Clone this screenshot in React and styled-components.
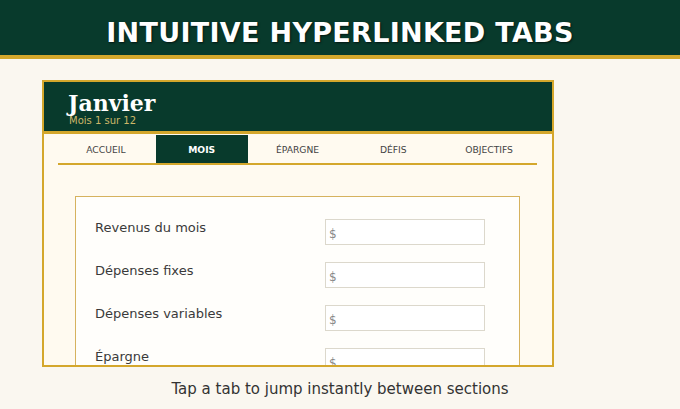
import React from 'react';
import styled, { createGlobalStyle } from 'styled-components';

const colors = {
  green: '#083a2c',
  gold: '#d4a72c',
  page: '#faf7f0',
  frame: '#fffaf0',
  card: '#fffefb',
  text: '#333333',
};

const GlobalStyle = createGlobalStyle`
  html, body {
    margin: 0;
    padding: 0;
    background: ${colors.page};
    font-family: "DejaVu Sans", Verdana, sans-serif;
  }
`;

const Page = styled.div`
  width: 680px;
  height: 409px;
  display: flex;
  flex-direction: column;
  overflow: hidden;
`;

const Banner = styled.header`
  height: 59px;
  box-sizing: border-box;
  padding-top: 10px;
  background: ${colors.green};
  border-bottom: 4px solid ${colors.gold};
  display: flex;
  align-items: center;
  justify-content: center;
  flex-shrink: 0;
`;

const BannerTitle = styled.h1`
  margin: 0;
  color: #fff;
  font-size: 27px;
  font-weight: 700;
  letter-spacing: 0.3px;
  text-shadow: 1px 1px 2px rgba(0, 0, 0, 0.6);
`;

const Stage = styled.div`
  flex: 1;
  display: flex;
  flex-direction: column;
  padding: 21px 0 0 42px;
`;

const Frame = styled.div`
  width: 508px;
  height: 283px;
  border: 2px solid ${colors.gold};
  background: ${colors.frame};
  display: flex;
  flex-direction: column;
  overflow: hidden;
`;

const AppHeader = styled.div`
  height: 52px;
  background: ${colors.green};
  border-bottom: 3px solid ${colors.gold};
  padding: 9px 0 0 24px;
  box-sizing: border-box;
  flex-shrink: 0;
`;

const Month = styled.div`
  font-family: "DejaVu Serif", Georgia, serif;
  font-weight: 700;
  font-size: 22px;
  line-height: 24px;
  color: #fff;
`;

const MonthSub = styled.div`
  font-size: 10px;
  line-height: 11px;
  color: #cdb768;
  margin-left: 1px;
`;

const Tabs = styled.nav`
  display: flex;
  margin: 1px 15px 0 14px;
  border-bottom: 2px solid ${colors.gold};
  flex-shrink: 0;
`;

const Tab = styled.div`
  flex: 1;
  margin: 0 2px;
  height: 28px;
  display: flex;
  align-items: center;
  justify-content: center;
  font-size: 9.2px;
  color: ${p => (p.$active ? '#fff' : '#444')};
  font-weight: ${p => (p.$active ? 700 : 400)};
  background: ${p => (p.$active ? colors.green : 'transparent')};
`;

const Content = styled.div`
  padding: 31px 32px 0 31px;
`;

const Card = styled.div`
  background: ${colors.card};
  border: 1px solid #d6b25e;
  padding: 22px 34px 20px 19px;
  display: flex;
  flex-direction: column;
  gap: 17px;
`;

const Row = styled.div`
  display: flex;
  justify-content: space-between;
  align-items: flex-start;
`;

const Label = styled.label`
  font-size: 13px;
  color: #3a3a3a;
  padding-top: 1px;
`;

const Field = styled.div`
  width: 160px;
  height: 26px;
  box-sizing: border-box;
  border: 1px solid #dcd8cc;
  background: #fff;
  display: flex;
  align-items: center;
  padding-left: 3px;
  padding-top: 3px;
  font-size: 12px;
  color: #888;
`;

const Caption = styled.p`
  margin: 0;
  width: 596px;
  text-align: center;
  font-size: 15px;
  color: ${colors.text};
  padding-top: 13px;
`;

const tabs = ['ACCUEIL', 'MOIS', 'ÉPARGNE', 'DÉFIS', 'OBJECTIFS'];
const fields = ['Revenus du mois', 'Dépenses fixes', 'Dépenses variables', 'Épargne'];

const App = () => (
  <>
    <GlobalStyle />
    <Page>
      <Banner>
        <BannerTitle>INTUITIVE HYPERLINKED TABS</BannerTitle>
      </Banner>
      <Stage>
        <Frame>
          <AppHeader>
            <Month>Janvier</Month>
            <MonthSub>Mois 1 sur 12</MonthSub>
          </AppHeader>
          <Tabs>
            {tabs.map(t => (
              <Tab key={t} $active={t === 'MOIS'}>{t}</Tab>
            ))}
          </Tabs>
          <Content>
            <Card>
              {fields.map(f => (
                <Row key={f}>
                  <Label>{f}</Label>
                  <Field>$</Field>
                </Row>
              ))}
            </Card>
          </Content>
        </Frame>
        <Caption>Tap a tab to jump instantly between sections</Caption>
      </Stage>
    </Page>
  </>
);

export default App;
